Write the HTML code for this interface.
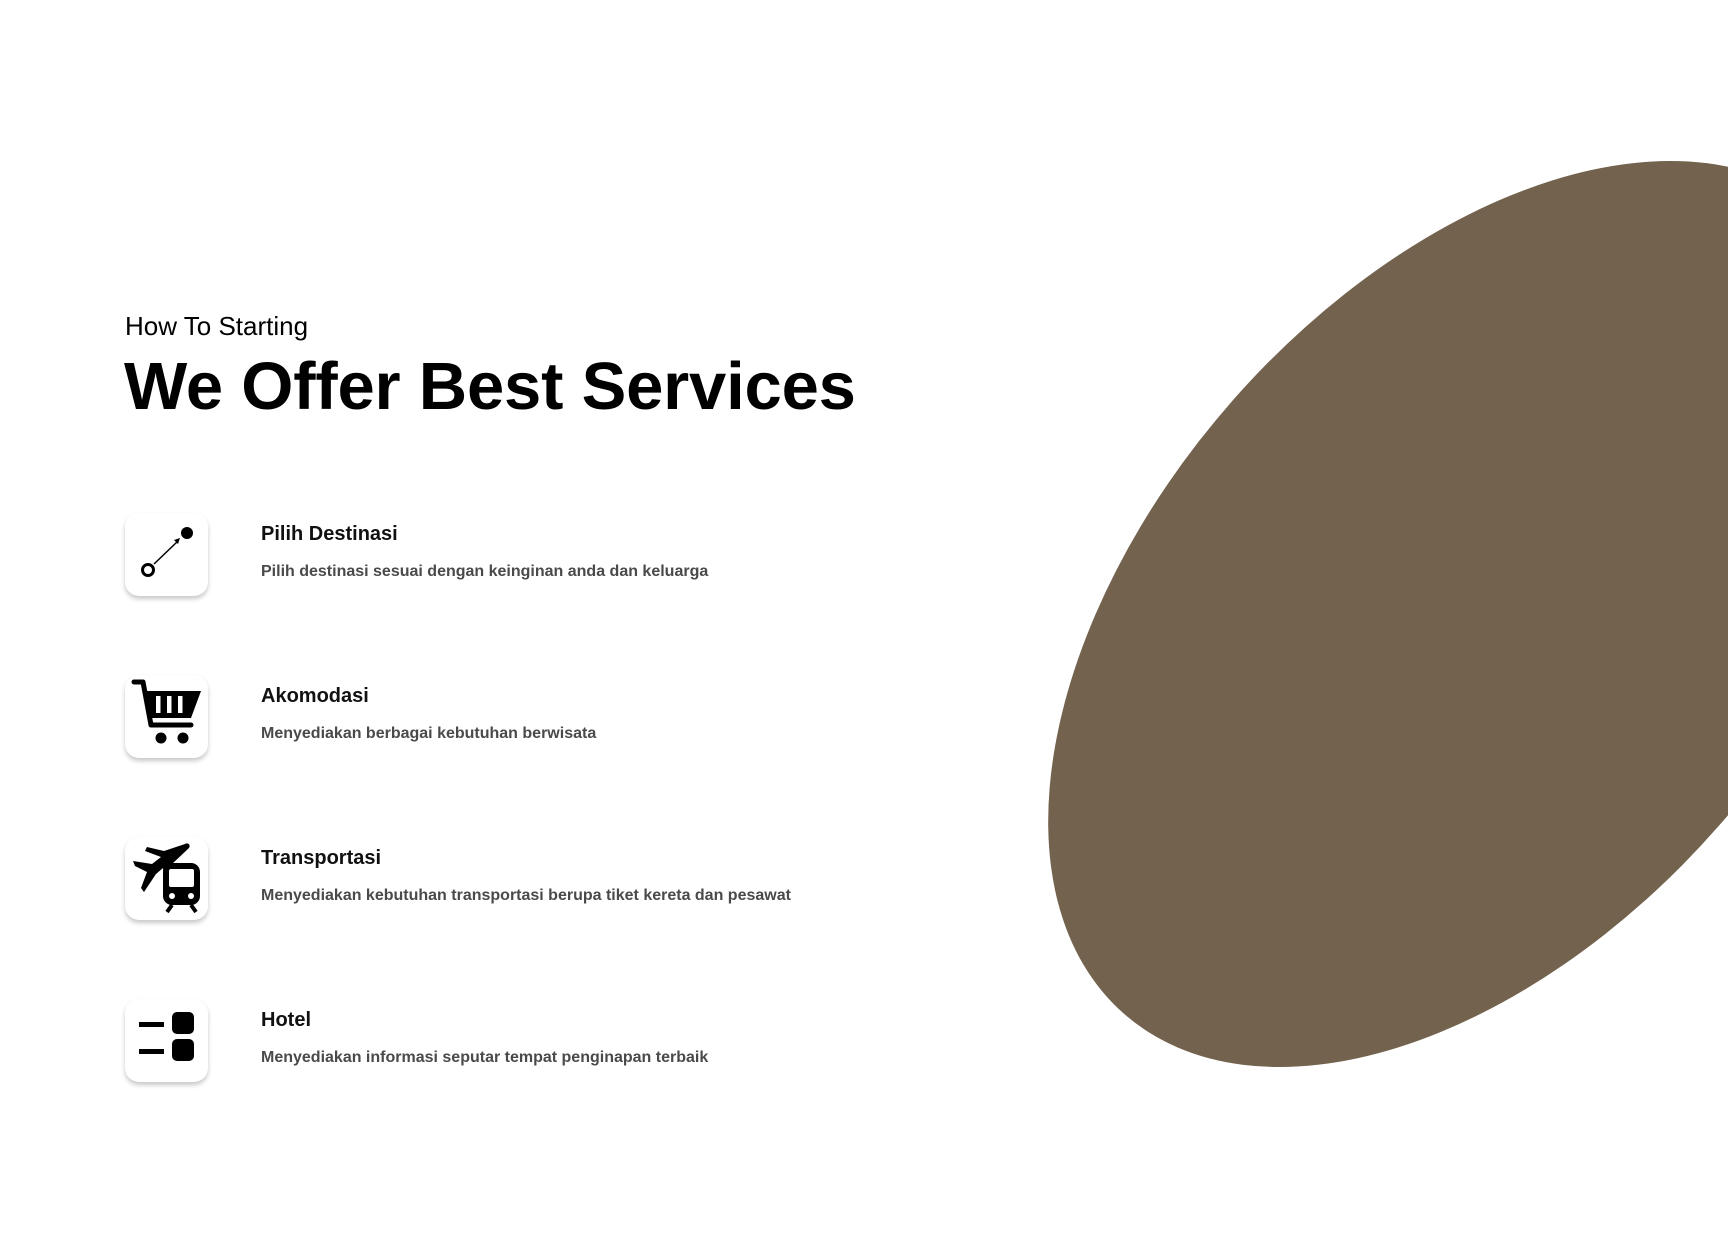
<!DOCTYPE html>
<html><head><meta charset="utf-8"><style>
html,body{margin:0;padding:0;background:#fff;}
body{width:1728px;height:1237px;position:relative;overflow:hidden;font-family:"Liberation Sans",sans-serif;color:#000;}
.sub{position:absolute;left:125px;top:311px;font-size:26px;}
h1{position:absolute;left:124px;top:348px;margin:0;font-size:67px;font-weight:bold;letter-spacing:-0.2px;}
.row{position:absolute;left:125px;width:900px;height:83px;}
.box{position:absolute;left:0;top:0;width:83px;height:83px;border-radius:14px;background:#fff;box-shadow:0 3px 5px rgba(0,0,0,0.22);overflow:visible;}
.box svg{position:absolute;left:0;top:0;overflow:visible}
.t{position:absolute;left:136px;top:10px;font-size:20px;font-weight:bold;color:#111;}
.d{position:absolute;left:136px;top:50px;font-size:16px;color:#4a4a4a;font-weight:bold;}
</style></head><body>
<svg width="1728" height="1237" style="position:absolute;left:0;top:0">
<ellipse cx="1475" cy="614" rx="532" ry="323" transform="rotate(-48.7 1475 614)" fill="#73624d"/>
</svg>
<div class="sub">How To Starting</div>
<h1>We Offer Best Services</h1>

<div class="row" style="top:513px">
<div class="box"><svg width="83" height="83" viewBox="0 0 83 83">
<circle cx="23" cy="57" r="5.5" fill="none" stroke="#000" stroke-width="3"/>
<circle cx="62" cy="20" r="6" fill="#000"/>
<line x1="29" y1="51" x2="53" y2="28" stroke="#000" stroke-width="1.5"/>
<path d="M55 25 L49 27 L53 31 Z" fill="#000"/>
</svg></div>
<div class="t">Pilih Destinasi</div><div class="d">Pilih destinasi sesuai dengan keinginan anda dan keluarga</div>
</div>

<div class="row" style="top:675px">
<div class="box"><svg width="83" height="83" viewBox="0 0 83 83">
<path d="M9 7 H18 L26 50 H66" fill="none" stroke="#000" stroke-width="5" stroke-linecap="round" stroke-linejoin="round"/>
<path d="M19 16 H76 L66 43 H26 Z" fill="#000"/>
<rect x="31" y="21" width="4.5" height="17" fill="#fff"/>
<rect x="42" y="21" width="4.5" height="17" fill="#fff"/>
<rect x="53" y="21" width="4.5" height="17" fill="#fff"/>
<circle cx="36" cy="63" r="5.5" fill="#000"/>
<circle cx="58" cy="63" r="5.5" fill="#000"/>
</svg></div>
<div class="t">Akomodasi</div><div class="d">Menyediakan berbagai kebutuhan berwisata</div>
</div>

<div class="row" style="top:837px">
<div class="box"><svg width="83" height="83" viewBox="0 0 83 83">
<path d="M60 7 C63 5 66 8 64 11 L47 27 L43 40 L39 44 L38 31 L31 37 L19 55 L16 51 L22 35 L10 29 L8 24 L27 27 L36 20 L20 14 L22 10 L39 14 Z" fill="#000"/>
<rect x="38" y="26" width="37" height="42" rx="9" fill="#000"/>
<rect x="44" y="32" width="25" height="18" rx="2" fill="#fff"/>
<circle cx="47" cy="59" r="3" fill="#fff"/><circle cx="66" cy="59" r="3" fill="#fff"/>
<path d="M47 68 L42 75 M66 68 L71 75" stroke="#000" stroke-width="4"/>
</svg></div>
<div class="t">Transportasi</div><div class="d">Menyediakan kebutuhan transportasi berupa tiket kereta dan pesawat</div>
</div>

<div class="row" style="top:999px">
<div class="box"><svg width="83" height="83" viewBox="0 0 83 83">
<rect x="14" y="23" width="25" height="5" fill="#000"/>
<rect x="14" y="50" width="25" height="5" fill="#000"/>
<rect x="47" y="13" width="22" height="22" rx="5" fill="#000"/>
<rect x="47" y="40" width="22" height="22" rx="5" fill="#000"/>
</svg></div>
<div class="t">Hotel</div><div class="d">Menyediakan informasi seputar tempat penginapan terbaik</div>
</div>
</body></html>
